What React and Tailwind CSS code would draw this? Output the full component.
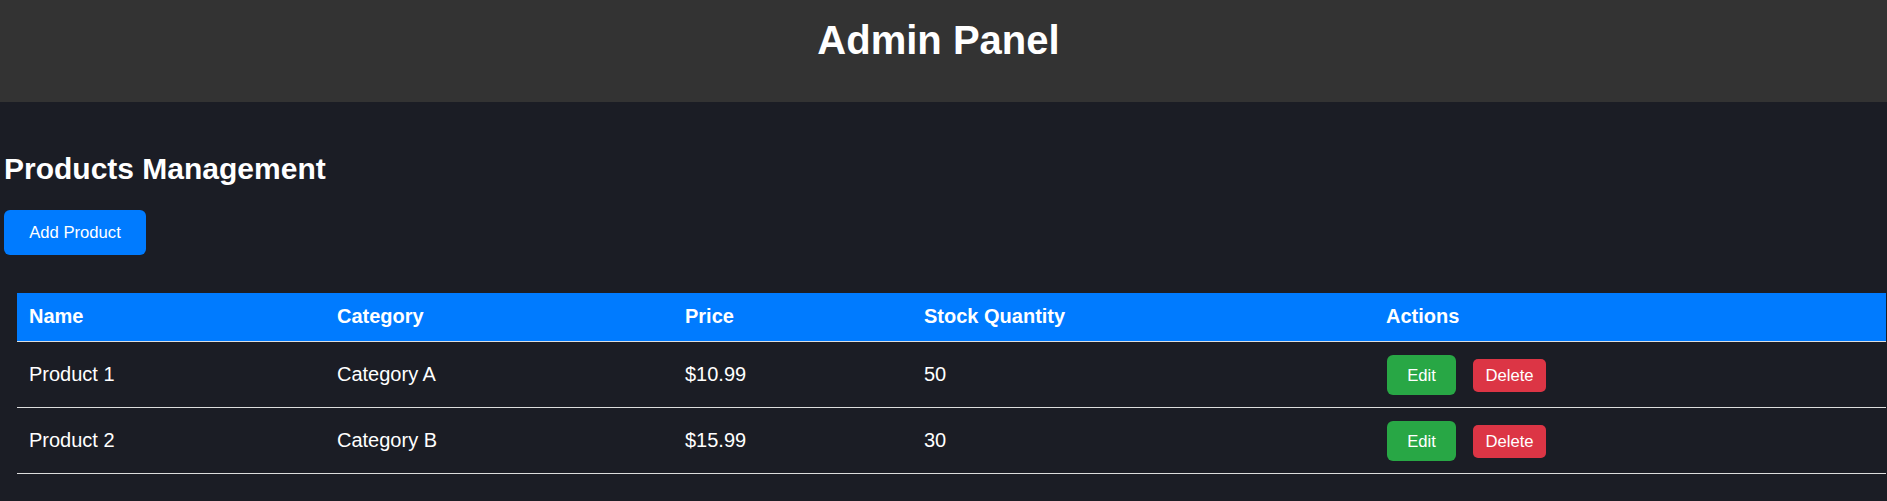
import React from "react";

const rows = [
  { name: "Product 1", category: "Category A", price: "$10.99", stock: "50" },
  { name: "Product 2", category: "Category B", price: "$15.99", stock: "30" },
];

export default function App() {
  return (
    <div
      className="min-h-[501px] bg-[#1b1d25] text-white"
      style={{ fontFamily: '"Liberation Sans", Arial, sans-serif' }}
    >
      <header className="h-[102px] bg-[#333333] pt-[17px]">
        <h1 className="pr-[10px] text-center text-[40px] leading-[46px] font-bold">Admin Panel</h1>
      </header>
      <main>
        <h2 className="mt-[50px] pl-[4px] text-[30px] leading-[34px] font-bold">Products Management</h2>
        <button className="ml-[4px] mt-[24px] flex h-[45px] w-[142px] items-center justify-center rounded-[6px] bg-[#007bff] text-[16.67px] leading-[19px] text-white">
          Add Product
        </button>
        <table className="ml-[17px] mt-[38px] w-[1869px] table-fixed border-collapse">
          <colgroup>
            <col className="w-[308px]" />
            <col className="w-[348px]" />
            <col className="w-[239px]" />
            <col className="w-[462px]" />
            <col className="w-[512px]" />
          </colgroup>
          <thead>
            <tr className="h-[48px] border-b border-[#dddddd] bg-[#007bff]">
              <th className="pl-[12px] text-left align-middle text-[20px] leading-[23px] font-bold">Name</th>
              <th className="pl-[12px] text-left align-middle text-[20px] leading-[23px] font-bold">Category</th>
              <th className="pl-[12px] text-left align-middle text-[20px] leading-[23px] font-bold">Price</th>
              <th className="pl-[12px] text-left align-middle text-[20px] leading-[23px] font-bold">Stock Quantity</th>
              <th className="pl-[12px] text-left align-middle text-[20px] leading-[23px] font-bold">Actions</th>
            </tr>
          </thead>
          <tbody>
            {rows.map((r) => (
              <tr key={r.name} className="h-[66px] border-b border-[#dddddd]">
                <td className="pl-[12px] align-middle text-[20px] leading-[23px]">{r.name}</td>
                <td className="pl-[12px] align-middle text-[20px] leading-[23px]">{r.category}</td>
                <td className="pl-[12px] align-middle text-[20px] leading-[23px]">{r.price}</td>
                <td className="pl-[12px] align-middle text-[20px] leading-[23px]">{r.stock}</td>
                <td className="pl-[13px] align-middle">
                  <div className="flex items-center gap-[17px] pt-[2px]">
                    <button className="flex h-[40px] w-[69px] items-center justify-center rounded-[6px] bg-[#28a745] text-[16.67px] leading-[19px] text-white">
                      Edit
                    </button>
                    <button className="flex h-[33px] w-[73px] items-center justify-center rounded-[5px] bg-[#dc3545] text-[16.67px] leading-[19px] text-white">
                      Delete
                    </button>
                  </div>
                </td>
              </tr>
            ))}
          </tbody>
        </table>
      </main>
    </div>
  );
}
